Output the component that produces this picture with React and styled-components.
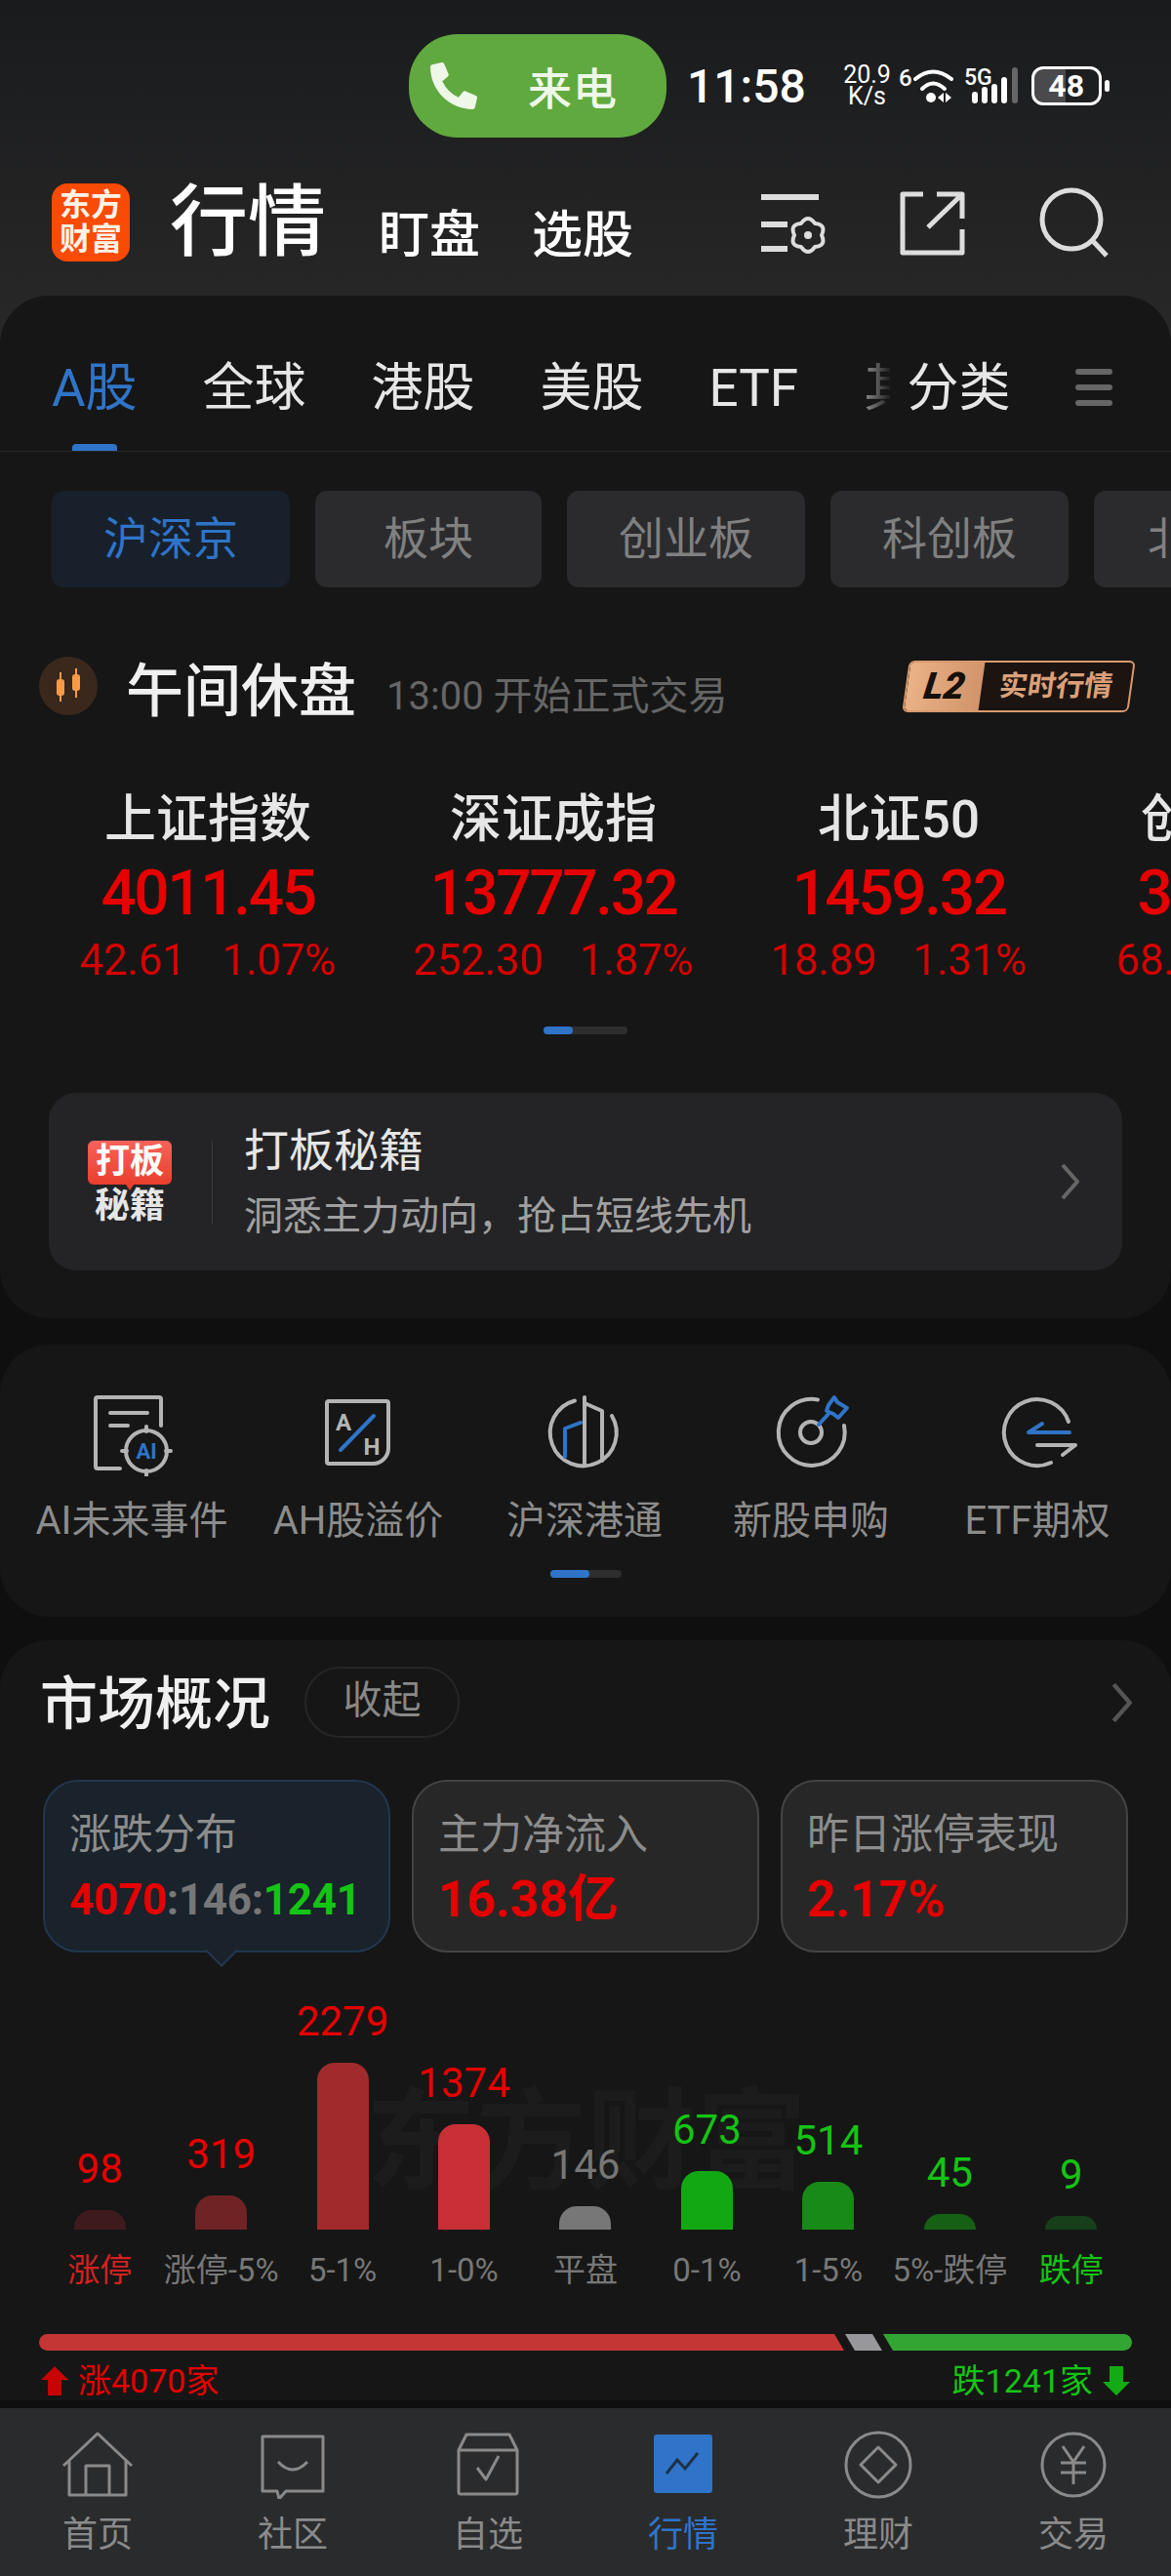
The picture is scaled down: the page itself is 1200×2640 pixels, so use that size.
import React from 'react'
import styled, { createGlobalStyle } from 'styled-components'
import { FaPhoneAlt } from 'react-icons/fa'

const RED = '#e60000'
const GREEN = '#14c414'
const BLUE = '#2f74c8'

const GlobalStyle = createGlobalStyle`
  html, body { margin: 0; padding: 0; background: #0f0f0f; }
  body { font-family: Roboto, "Noto Sans CJK SC", sans-serif; }
  * { box-sizing: border-box; }
  svg { display: block; }
`

const Page = styled.div`
  width: 1200px;
  height: 2640px;
  display: flex;
  flex-direction: column;
  overflow: hidden;
  background: linear-gradient(#1a1b1d 0, #282828 350px, #0f0f0f 350px);
`

const Content = styled.div`
  flex: 1;
  min-height: 0;
  overflow: hidden;
`

/* status bar */
const StatusBar = styled.div`
  display: flex;
  align-items: center;
  height: 106px;
  margin-top: 35px;
  padding-left: 419px;
  color: #fff;
`

const CallPill = styled.div`
  width: 264px;
  height: 106px;
  border-radius: 50px;
  background: #60a93f;
  display: flex;
  align-items: center;
  padding-left: 22px;
  color: #eef7e8;
  font-size: 45px;
  font-weight: 500;
  span { margin-left: 52px; letter-spacing: 1px; }
`

const Clock = styled.div`
  margin-left: 21px;
  width: 118px;
  font-size: 48px;
  font-weight: 500;
  white-space: nowrap;
`

const Speed = styled.div`
  margin-left: 43px;
  width: 47px;
  font-size: 25px;
  line-height: 22px;
  text-align: center;
  white-space: nowrap;
  display: flex;
  flex-direction: column;
  align-items: center;
`

const WifiGen = styled.div`
  margin: -16px 1px 0 9px;
  font-size: 24px;
  font-weight: 500;
`

const SignalGap = styled.div`
  width: 8px;
`

const Battery = styled.div`
  margin-left: 13px;
  width: 72px;
  height: 40px;
  border: 3px solid #fff;
  border-radius: 12px;
  background: linear-gradient(90deg, #4a4a4d 48%, transparent 48%);
  display: flex;
  align-items: center;
  justify-content: center;
  font-size: 32px;
  font-weight: 700;
`

const BatteryNub = styled.div`
  margin-left: 3px;
  width: 5px;
  height: 12px;
  border-radius: 3px;
  background: #fff;
`

/* app header */
const Header = styled.div`
  height: 162px;
  padding: 47px 0 0 53px;
  display: flex;
  align-items: flex-start;
`

const Logo = styled.div`
  width: 80px;
  height: 80px;
  border-radius: 16px;
  background: #f94a06;
  color: #fff3e6;
  font-size: 32px;
  font-weight: 700;
  line-height: 35px;
  text-align: center;
  padding-top: 5px;
`

const PageTitle = styled.div`
  margin-left: 41px;
  font-size: 80px;
  line-height: 80px;
  font-weight: 500;
  color: #fff;
`

const SubTitle = styled.div`
  margin: 26px 0 0 ${p => p.$gap}px;
  font-size: 52px;
  line-height: 56px;
  font-weight: 500;
  color: #fff;
`

const HeaderIcons = styled.div`
  margin-left: auto;
  padding-right: 60px;
  margin-top: 2px;
`

/* panels */
const Panel = styled.section`
  background: #161616;
  border-radius: 50px;
`

const TopPanel = styled(Panel)`
  padding-bottom: 49px;
`

const TabRow = styled.div`
  height: 160px;
  padding: 69px 60px 0 53px;
  display: flex;
  gap: 67px;
  border-bottom: 1px solid #262626;
`

const Tab = styled.div`
  position: relative;
  height: 90px;
  font-size: 53px;
  line-height: 52px;
  white-space: nowrap;
  color: ${p => (p.$active ? BLUE : '#e6e6e6')};
  ${p => p.$active && `
    &::after {
      content: '';
      position: absolute;
      left: 21px;
      bottom: 0;
      width: 46px;
      height: 7px;
      border-radius: 4px 4px 0 0;
      background: ${BLUE};
    }
  `}
`

const FadedTab = styled(Tab)`
  width: 29px;
  margin-right: -50px;
  overflow: hidden;
  -webkit-mask-image: linear-gradient(90deg, rgba(0,0,0,.6), rgba(0,0,0,.05));
  mask-image: linear-gradient(90deg, rgba(0,0,0,.6), rgba(0,0,0,.05));
`

const MenuIcon = styled.div`
  margin: 6px 0 0 auto;
  width: 40px;
  display: flex;
  flex-direction: column;
  gap: 10px;
  i {
    display: block;
    height: 6px;
    border-radius: 3px;
    background: #666;
  }
`

const ChipRow = styled.div`
  margin-top: 40px;
  padding-left: 53px;
  display: flex;
  gap: 26px;
  overflow: hidden;
`

const Chip = styled.div`
  flex: none;
  width: ${p => p.$w}px;
  height: 99px;
  border-radius: 12px;
  background: ${p => (p.$active ? '#17202b' : '#2b2b2e')};
  color: ${p => (p.$active ? BLUE : '#808080')};
  font-size: 46px;
  line-height: 99px;
  padding-left: ${p => p.$pad || 0}px;
  text-align: ${p => (p.$pad ? 'left' : 'center')};
  white-space: nowrap;
`

const SessionRow = styled.div`
  margin-top: 71px;
  height: 60px;
  padding: 0 40px;
  display: flex;
  align-items: center;
`

const CandleBadge = styled.div`
  width: 60px;
  height: 60px;
  border-radius: 50%;
  background: #3a281c;
  display: flex;
  align-items: center;
  justify-content: center;
`

const SessionTitle = styled.div`
  margin-left: 29px;
  font-size: 59px;
  font-weight: 500;
  color: #f0f0f0;
  white-space: nowrap;
`

const SessionNote = styled.div`
  margin: 14px 0 0 31px;
  font-size: 40px;
  color: #666;
  white-space: nowrap;
`

const L2Badge = styled.div`
  margin-left: auto;
  width: 232px;
  height: 53px;
  display: flex;
  transform: skewX(-8deg);
  border: 2px solid #d89a6e;
  border-radius: 6px;
  overflow: hidden;
  background: #1c1411;
`

const L2Mark = styled.div`
  width: 76px;
  background: linear-gradient(90deg, #eab286, #d2946a);
  color: #17100b;
  font-size: 38px;
  font-weight: 900;
  font-style: italic;
  line-height: 48px;
  text-align: center;
`

const L2Text = styled.div`
  flex: 1;
  color: #dba078;
  font-size: 29px;
  font-weight: 700;
  line-height: 48px;
  text-align: center;
  white-space: nowrap;
`

const IndexRow = styled.div`
  margin-top: 77px;
  padding-left: 36px;
  display: flex;
  overflow: hidden;
`

const IndexCol = styled.div`
  flex: none;
  width: 354px;
  text-align: center;
  white-space: nowrap;
`

const IndexName = styled.div`
  font-size: 53px;
  line-height: 60px;
  font-weight: 500;
  color: #e6e6e6;
`

const IndexPrice = styled.div`
  margin-top: 11px;
  font-size: 64px;
  line-height: 70px;
  font-weight: 500;
  letter-spacing: -2.4px;
  color: ${RED};
`

const IndexDelta = styled.div`
  margin-top: 8px;
  font-size: 44px;
  line-height: 50px;
  letter-spacing: -.3px;
  color: ${RED};
  display: flex;
  justify-content: center;
  gap: 37px;
  opacity: .92;
`

const Dots = styled.div`
  margin: ${p => p.$top}px auto 0;
  width: ${p => p.$w}px;
  height: 8px;
  border-radius: 4px;
  background: #2e2e2e;
  &::before {
    content: '';
    display: block;
    width: ${p => p.$fill}px;
    height: 8px;
    border-radius: 4px;
    background: ${BLUE};
  }
`

const PromoCard = styled.div`
  margin: 60px 50px 0;
  height: 182px;
  border-radius: 28px;
  background: #242427;
  display: flex;
  align-items: center;
  padding: 0 44px 0 40px;
`

const PromoLogo = styled.div`
  width: 86px;
  display: flex;
  flex-direction: column;
  align-items: center;
  font-weight: 700;
`

const PromoTag = styled.div`
  position: relative;
  width: 86px;
  height: 45px;
  border-radius: 6px;
  background: linear-gradient(#f8625a, #ea3f2e);
  color: #fff;
  font-size: 35px;
  line-height: 44px;
  text-align: center;
  &::after {
    content: '';
    position: absolute;
    left: 39px;
    bottom: -6px;
    border: 4px solid transparent;
    border-top: 6px solid #ea3f2e;
    border-bottom: 0;
  }
`

const PromoLower = styled.div`
  margin-top: 5px;
  color: #e6e6e6;
  font-size: 36px;
  line-height: 34px;
`

const PromoDivider = styled.div`
  margin-left: 41px;
  width: 1px;
  height: 85px;
  background: #3a3a3d;
`

const PromoText = styled.div`
  margin-left: 32px;
  flex: 1;
`

const PromoTitle = styled.div`
  font-size: 46px;
  line-height: 56px;
  color: #e6e6e6;
`

const PromoSub = styled.div`
  margin-top: 15px;
  font-size: 40px;
  line-height: 50px;
  color: #a0a0a0;
`

const ShortcutPanel = styled(Panel)`
  margin-top: 27px;
  padding: 51px 0 40px;
`

const ShortcutGrid = styled.div`
  padding-left: 19px;
  display: grid;
  grid-template-columns: repeat(5, 232px);
`

const Shortcut = styled.div`
  display: flex;
  flex-direction: column;
  align-items: center;
  gap: 21px;
`

const ShortcutLabel = styled.div`
  font-size: 40px;
  line-height: 50px;
  color: #8c8c8c;
  white-space: nowrap;
`

const MarketPanel = styled(Panel)`
  margin-top: 24px;
  padding-top: 27px;
  border-radius: 50px 50px 0 0;
`

const MarketHead = styled.div`
  height: 73px;
  padding: 0 40px 0 41px;
  display: flex;
  align-items: center;
  justify-content: space-between;
`

const MarketTitle = styled.div`
  margin-bottom: 6px;
  font-size: 59px;
  font-weight: 500;
  color: #f0f0f0;
`

const CollapseBtn = styled.div`
  margin-left: 35px;
  width: 159px;
  height: 73px;
  border: 2px solid #262626;
  border-radius: 36px;
  color: #888;
  font-size: 40px;
  line-height: 66px;
  text-align: center;
`

const TitleGroup = styled.div`
  display: flex;
  align-items: center;
`

const StatGrid = styled.div`
  margin-top: 43px;
  padding: 0 44px;
  display: grid;
  grid-template-columns: repeat(3, 356px);
  gap: 22px;
`

const StatCard = styled.div`
  position: relative;
  height: 177px;
  padding: 29px 0 0 25px;
  border-radius: 36px;
  border: 2px solid ${p => (p.$active ? '#22364f' : '#444')};
  background: ${p => (p.$active ? '#1a222b' : '#272727')};
  ${p => p.$active && `
    &::after {
      content: '';
      position: absolute;
      left: 169px;
      bottom: -12px;
      width: 22px;
      height: 22px;
      background: #1a222b;
      border-right: 2px solid #22364f;
      border-bottom: 2px solid #22364f;
      transform: rotate(45deg);
    }
  `}
`

const StatLabel = styled.div`
  font-size: 43px;
  line-height: 50px;
  color: #8c8c8c;
  white-space: nowrap;
`

const StatValue = styled.div`
  margin-top: 12px;
  font-size: ${p => p.$size}px;
  line-height: 60px;
  font-weight: 700;
  letter-spacing: -.3px;
  color: ${RED};
  white-space: nowrap;
`

const Tone = styled.span`
  color: ${p => p.$c};
`

const Chart = styled.div`
  position: relative;
  height: 346px;
  padding: 0 40px;
  display: grid;
  grid-template-columns: repeat(9, 1fr);
  align-items: end;
`

const Watermark = styled.div`
  position: absolute;
  left: 375px;
  top: 130px;
  font-size: 113px;
  line-height: 130px;
  font-weight: 700;
  color: #1c1c1c;
  white-space: nowrap;
`

const ChartCol = styled.div`
  position: relative;
  display: flex;
  flex-direction: column;
  align-items: center;
`

const BarValue = styled.div`
  font-size: 42px;
  line-height: 50px;
  color: ${p => p.$c};
`

const Bar = styled.div`
  margin-top: 17px;
  width: 53px;
  height: ${p => p.$h}px;
  background: ${p => p.$c};
  border-radius: ${p => Math.min(p.$h, 18)}px ${p => Math.min(p.$h, 18)}px 0 0;
`

const BarLabel = styled.div`
  margin-top: 22px;
  font-size: 33px;
  line-height: 40px;
  color: ${p => p.$c};
  white-space: nowrap;
`

const Ratio = styled.div`
  margin: 45px 40px 0;
  height: 17px;
  display: flex;
  gap: 1px;
`

const RatioRed = styled.div`
  width: 825px;
  border-radius: 9px 0 0 9px;
  background: #c43636;
  clip-path: polygon(0 0, calc(100% - 10px) 0, 100% 100%, 0 100%);
`

const RatioFlat = styled.div`
  width: 38px;
  background: #98989c;
  clip-path: polygon(0 0, 28px 0, 100% 100%, 10px 100%);
`

const RatioGreen = styled.div`
  flex: 1;
  border-radius: 0 9px 9px 0;
  background: #33a532;
  clip-path: polygon(0 0, 100% 0, 100% 100%, 10px 100%);
`

const Legend = styled.div`
  margin-top: 11px;
  padding: 0 42px;
  display: flex;
  justify-content: space-between;
  font-size: 34px;
  line-height: 40px;
`

const LegendItem = styled.div`
  display: flex;
  align-items: center;
  gap: 10px;
  color: ${p => p.$c};
`

/* bottom nav */
const BottomNav = styled.nav`
  flex: none;
  height: 172px;
  padding-top: 23px;
  background: #2a2b2d;
  display: grid;
  grid-template-columns: repeat(6, 200px);
`

const NavItem = styled.div`
  display: flex;
  flex-direction: column;
  align-items: center;
  color: ${p => (p.$active ? BLUE : '#8a8a8a')};
`

const NavLabel = styled.div`
  margin-top: 15px;
  font-size: 36px;
  line-height: 44px;
`

const Chevron = ({ w, h, color }) => (
  <svg width={w} height={h} viewBox="0 0 20 36" fill="none" stroke={color} strokeWidth="4">
    <path d="M3 1l15 17L3 35" />
  </svg>
)

const WifiIcon = () => (
  <svg width="44" height="38" viewBox="0 0 44 38" fill="#fff">
    <path d="M2 12Q20-3 39 12" fill="none" stroke="#fff" strokeWidth="4" strokeLinecap="round" />
    <path d="M9 22Q20 11 32 22" fill="none" stroke="#fff" strokeWidth="4" strokeLinecap="round" />
    <circle cx="18" cy="31" r="5" />
    <path d="M25 31l6-5v10zM33 26l6 5-6 5z" />
  </svg>
)

const SignalIcon = () => (
  <svg width="56" height="38" viewBox="0 0 56 38">
    <text x="0" y="18" fontSize="23" fontWeight="500" fill="#fff" fontFamily="Roboto">5G</text>
    <rect x="8" y="25" width="6" height="12" rx="3" fill="#fff" />
    <rect x="18" y="20" width="6" height="17" rx="3" fill="#fff" />
    <rect x="28" y="17" width="6" height="20" rx="3" fill="#fff" />
    <rect x="38" y="10" width="6" height="27" rx="3" fill="#fff" />
    <rect x="49" y="0" width="6" height="37" rx="3" fill="#666" />
  </svg>
)

// gear drawn as a soft six lobed flower
const flowerPath = (cx, cy, outer, inner, lobes) => {
  const step = (Math.PI * 2) / lobes
  const pt = (r, a) => `${(cx + r * Math.cos(a)).toFixed(1)} ${(cy + r * Math.sin(a)).toFixed(1)}`
  let d = `M${pt(inner, -Math.PI / 2 - step / 2)}`
  for (let i = 0; i < lobes; i++) {
    const a = -Math.PI / 2 + i * step
    d += `Q${pt(outer * 1.22, a)} ${pt(inner, a + step / 2)}`
  }
  return d + 'Z'
}

const HeaderIconSet = () => (
  <svg width="360" height="80" viewBox="0 0 360 80" fill="none" stroke="#ddd" strokeWidth="5">
    <path d="M0 12h59M0 40h27M0 65h27" strokeWidth="6" />
    <path d={flowerPath(48, 51, 18, 14, 6)} strokeWidth="4" strokeLinejoin="round" />
    <circle cx="48" cy="51" r="4" fill="#ddd" stroke="none" />
    <path d="M166 9h-21v60h61V45M206 34V9h-26M206 9l-35 34" strokeLinejoin="round" />
    <circle cx="318" cy="35" r="30" />
    <path d="M339 56l15 16" />
  </svg>
)

const CandleIcon = () => (
  <svg width="32" height="40" viewBox="0 0 32 40" fill="#f59b47" stroke="#f59b47" strokeWidth="2">
    <path d="M8 6v30M24 2v30" />
    <rect x="4" y="13" width="8" height="17" rx="3" stroke="none" />
    <rect x="20" y="8" width="8" height="17" rx="3" stroke="none" />
  </svg>
)

const iconStroke = { fill: 'none', stroke: '#b4b4b4', strokeWidth: 4, strokeLinecap: 'round', strokeLinejoin: 'round' }
const blueStroke = { ...iconStroke, stroke: BLUE }
const navStroke = { fill: 'none', stroke: '#8a8a8a', strokeWidth: 3 }

const AiIcon = () => (
  <svg width="100" height="84" viewBox="0 0 100 84">
    <path {...iconStroke} d="M80 32V5a2 2 0 0 0-2-2H15a2 2 0 0 0-2 2v69a2 2 0 0 0 2 2h23M28 19h38M28 32h18" />
    <circle {...iconStroke} cx="65" cy="58" r="21" />
    <path {...iconStroke} d="M65 33v5M65 78v5M40 58h5M85 58h5" />
    <text x="65" y="66" textAnchor="middle" fontSize="22" fontWeight="700" fill={BLUE} fontFamily="Roboto">AI</text>
  </svg>
)

const AhIcon = () => (
  <svg width="100" height="84" viewBox="0 0 100 84">
    <path {...iconStroke} d="M18 9a2 2 0 0 1 2-2h59a2 2 0 0 1 2 2v46a16 16 0 0 1-16 16H20a2 2 0 0 1-2-2z" />
    <path {...blueStroke} d="M32 57l34-35" />
    <text x="35" y="37" textAnchor="middle" fontSize="24" fontWeight="700" fill="#b4b4b4" fontFamily="Roboto">A</text>
    <text x="64" y="62" textAnchor="middle" fontSize="24" fontWeight="700" fill="#b4b4b4" fontFamily="Roboto">H</text>
  </svg>
)

const ConnectIcon = () => (
  <svg width="100" height="84" viewBox="0 0 100 84">
    <path {...iconStroke} d="M40 6.500A34 34 0 1 0 78 22" />
    <path {...iconStroke} d="M50 3v70M50 9l18 8v51" />
    <path {...blueStroke} d="M30 64V35l16-6" />
  </svg>
)

const IpoIcon = () => (
  <svg width="100" height="84" viewBox="0 0 100 84">
    <path {...iconStroke} d="M57 5.500A34 34 0 1 0 84 32" />
    <circle {...iconStroke} cx="50" cy="39" r="11" />
    <path {...blueStroke} d="M58 31l10-11M74 3l3 5 10 6-9 10-5-4-7-3 2-6z" />
  </svg>
)

const EtfIcon = () => (
  <svg width="100" height="84" viewBox="0 0 100 84">
    <path {...iconStroke} d="M82 28A34 34 0 1 0 64 70" />
    <path {...blueStroke} d="M83 39H41l14-9" />
    <path {...iconStroke} d="M50 52h39l-13 10" />
  </svg>
)

const HomeIcon = () => (
  <svg width="74" height="70" viewBox="0 0 74 70" {...navStroke}>
    <path d="M2 36L37 3l35 33M8 31v35h58V31M25 66V36h24v30" strokeLinejoin="round" />
  </svg>
)

const CommunityIcon = () => (
  <svg width="74" height="70" viewBox="0 0 74 70" {...navStroke}>
    <path d="M6 6h62v56H30l-7 8-2-8H6zM22 32q15 16 30 0" strokeLinejoin="round" />
  </svg>
)

const WatchIcon = () => (
  <svg width="74" height="70" viewBox="0 0 74 70" {...navStroke}>
    <path d="M7 20L15 4h44l8 16v43a2 2 0 0 1-2 2H9a2 2 0 0 1-2-2zM7 20h60M26 38l9 12 13-24" strokeLinejoin="round" />
  </svg>
)

const MarketIcon = () => (
  <svg width="74" height="70" viewBox="0 0 74 70">
    <rect x="7" y="4" width="60" height="60" rx="3" fill={BLUE} />
    <path d="M20 44l11-14 8 9 13-16" fill="none" stroke="#1f3048" strokeWidth="3" />
  </svg>
)

const FinanceIcon = () => (
  <svg width="74" height="70" viewBox="0 0 74 70" {...navStroke}>
    <circle cx="37" cy="35" r="33" />
    <path d="M37 17l18 18-18 18-18-18z" strokeLinejoin="round" />
  </svg>
)

const TradeIcon = () => (
  <svg width="74" height="70" viewBox="0 0 74 70" {...navStroke}>
    <circle cx="37" cy="35" r="32" />
    <path d="M26 16l11 16 11-16M24 33h26M24 43h26M37 32v23" />
  </svg>
)

const UpArrow = () => (
  <svg width="28" height="30" viewBox="0 0 28 30" fill={RED}>
    <path d="M14 0l14 14h-7v16H7V14H0z" opacity=".85" />
  </svg>
)

const DownArrow = () => (
  <svg width="28" height="30" viewBox="0 0 28 30" fill={GREEN}>
    <path d="M14 30L0 16h7V0h14v16h7z" opacity=".85" />
  </svg>
)

const indices = [
  { name: '上证指数', price: '4011.45', delta: '42.61', pct: '1.07%' },
  { name: '深证成指', price: '13777.32', delta: '252.30', pct: '1.87%' },
  { name: '北证50', price: '1459.32', delta: '18.89', pct: '1.31%' },
  { name: '创业板指', price: '3195.54', delta: '68.42', pct: '2.19%' },
]

const shortcuts = [
  { label: 'AI未来事件', Icon: AiIcon },
  { label: 'AH股溢价', Icon: AhIcon },
  { label: '沪深港通', Icon: ConnectIcon },
  { label: '新股申购', Icon: IpoIcon },
  { label: 'ETF期权', Icon: EtfIcon },
]

const bars = [
  { value: 98, label: '涨停', h: 20, bar: '#3f1a1c', color: RED, labelColor: '#d62020' },
  { value: 319, label: '涨停-5%', h: 35, bar: '#6f2325', color: RED, labelColor: '#777' },
  { value: 2279, label: '5-1%', h: 171, bar: '#a02a2c', color: RED, labelColor: '#777' },
  { value: 1374, label: '1-0%', h: 108, bar: '#c83035', color: RED, labelColor: '#777' },
  { value: 146, label: '平盘', h: 24, bar: '#777', color: '#777', labelColor: '#777' },
  { value: 673, label: '0-1%', h: 60, bar: '#12a812', color: GREEN, labelColor: '#777' },
  { value: 514, label: '1-5%', h: 49, bar: '#178a17', color: GREEN, labelColor: '#777' },
  { value: 45, label: '5%-跌停', h: 16, bar: '#166016', color: GREEN, labelColor: '#777' },
  { value: 9, label: '跌停', h: 14, bar: '#173f1a', color: GREEN, labelColor: GREEN },
]

const nav = [
  { label: '首页', Icon: HomeIcon },
  { label: '社区', Icon: CommunityIcon },
  { label: '自选', Icon: WatchIcon },
  { label: '行情', Icon: MarketIcon, active: true },
  { label: '理财', Icon: FinanceIcon },
  { label: '交易', Icon: TradeIcon },
]

const App = () => (
  <Page>
    <GlobalStyle />
    <Content>
      <StatusBar>
        <CallPill>
          <FaPhoneAlt size={48} />
          <span>来电</span>
        </CallPill>
        <Clock>11:58</Clock>
        <Speed>
          <div>20.9</div>
          <div>K/s</div>
        </Speed>
        <WifiGen>6</WifiGen>
        <WifiIcon />
        <SignalGap />
        <SignalIcon />
        <Battery>48</Battery>
        <BatteryNub />
      </StatusBar>

      <Header>
        <Logo>东方<br />财富</Logo>
        <PageTitle>行情</PageTitle>
        <SubTitle $gap={54}>盯盘</SubTitle>
        <SubTitle $gap={53}>选股</SubTitle>
        <HeaderIcons><HeaderIconSet /></HeaderIcons>
      </Header>

      <TopPanel>
        <TabRow>
          <Tab $active>A股</Tab>
          <Tab>全球</Tab>
          <Tab>港股</Tab>
          <Tab>美股</Tab>
          <Tab>ETF</Tab>
          <FadedTab>其他</FadedTab>
          <Tab>分类</Tab>
          <MenuIcon><i /><i /><i /></MenuIcon>
        </TabRow>

        <ChipRow>
          <Chip $w={244} $active>沪深京</Chip>
          <Chip $w={232}>板块</Chip>
          <Chip $w={244}>创业板</Chip>
          <Chip $w={244}>科创板</Chip>
          <Chip $w={244} $pad={55}>北交所</Chip>
        </ChipRow>

        <SessionRow>
          <CandleBadge><CandleIcon /></CandleBadge>
          <SessionTitle>午间休盘</SessionTitle>
          <SessionNote>13:00 开始正式交易</SessionNote>
          <L2Badge>
            <L2Mark>L2</L2Mark>
            <L2Text>实时行情</L2Text>
          </L2Badge>
        </SessionRow>

        <IndexRow>
          {indices.map(i => (
            <IndexCol key={i.name}>
              <IndexName>{i.name}</IndexName>
              <IndexPrice>{i.price}</IndexPrice>
              <IndexDelta><span>{i.delta}</span><span>{i.pct}</span></IndexDelta>
            </IndexCol>
          ))}
        </IndexRow>
        <Dots $top={43} $w={86} $fill={30} />

        <PromoCard>
          <PromoLogo>
            <PromoTag>打板</PromoTag>
            <PromoLower>秘籍</PromoLower>
          </PromoLogo>
          <PromoDivider />
          <PromoText>
            <PromoTitle>打板秘籍</PromoTitle>
            <PromoSub>洞悉主力动向，抢占短线先机</PromoSub>
          </PromoText>
          <Chevron w={20} h={36} color="#666" />
        </PromoCard>
      </TopPanel>

      <ShortcutPanel>
        <ShortcutGrid>
          {shortcuts.map(({ label, Icon }) => (
            <Shortcut key={label}>
              <Icon />
              <ShortcutLabel>{label}</ShortcutLabel>
            </Shortcut>
          ))}
        </ShortcutGrid>
        <Dots $top={25} $w={73} $fill={40} />
      </ShortcutPanel>

      <MarketPanel>
        <MarketHead>
          <TitleGroup>
            <MarketTitle>市场概况</MarketTitle>
            <CollapseBtn>收起</CollapseBtn>
          </TitleGroup>
          <Chevron w={22} h={40} color="#555" />
        </MarketHead>

        <StatGrid>
          <StatCard $active>
            <StatLabel>涨跌分布</StatLabel>
            <StatValue $size={44}>
              4070<Tone $c="#777">:146:</Tone><Tone $c={GREEN}>1241</Tone>
            </StatValue>
          </StatCard>
          <StatCard>
            <StatLabel>主力净流入</StatLabel>
            <StatValue $size={52}>16.38亿</StatValue>
          </StatCard>
          <StatCard>
            <StatLabel>昨日涨停表现</StatLabel>
            <StatValue $size={52}>2.17%</StatValue>
          </StatCard>
        </StatGrid>

        <Chart>
          <Watermark>东方财富</Watermark>
          {bars.map(b => (
            <ChartCol key={b.label}>
              <BarValue $c={b.color}>{b.value}</BarValue>
              <Bar $h={b.h} $c={b.bar} />
              <BarLabel $c={b.labelColor}>{b.label}</BarLabel>
            </ChartCol>
          ))}
        </Chart>

        <Ratio>
          <RatioRed />
          <RatioFlat />
          <RatioGreen />
        </Ratio>
        <Legend>
          <LegendItem $c={RED}><UpArrow />涨4070家</LegendItem>
          <LegendItem $c={GREEN}>跌1241家<DownArrow /></LegendItem>
        </Legend>
      </MarketPanel>
    </Content>

    <BottomNav>
      {nav.map(({ label, Icon, active }) => (
        <NavItem key={label} $active={active}>
          <Icon />
          <NavLabel>{label}</NavLabel>
        </NavItem>
      ))}
    </BottomNav>
  </Page>
)

export default App
